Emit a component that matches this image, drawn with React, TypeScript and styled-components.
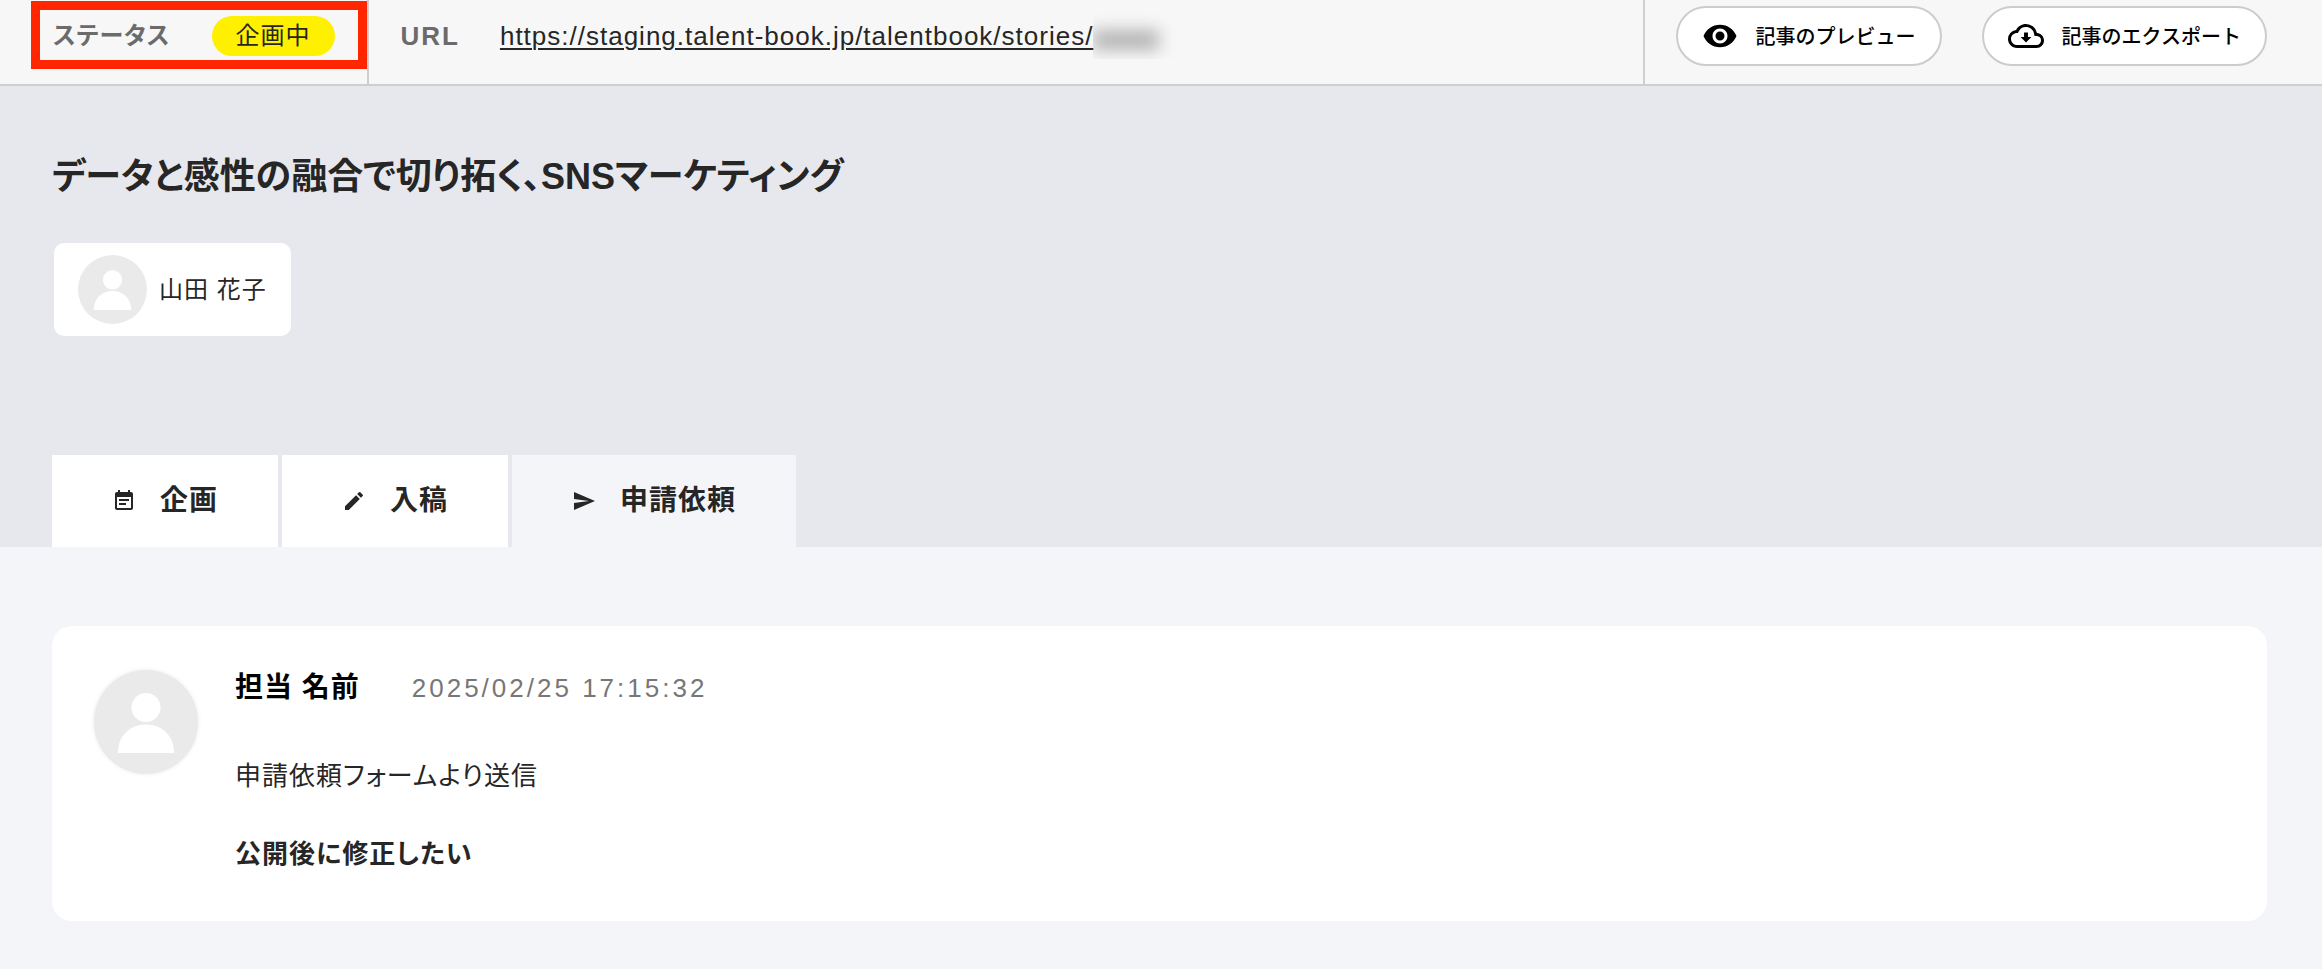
import React from "react";
import styled, { createGlobalStyle } from "styled-components";

const GlobalStyle = createGlobalStyle`
  *, *::before, *::after { box-sizing: border-box; }
  body {
    margin: 0;
    background: #f4f5f9;
    color: #262626;
    font-family: "Liberation Sans", "Noto Sans CJK JP", sans-serif;
    font-size: 24px;
    line-height: 1.5;
    letter-spacing: 1px;
    font-feature-settings: "palt";
  }
  h1, h2, p { margin: 0; }
  button { font: inherit; color: inherit; cursor: pointer; }
`;

const Header = styled.header`
  display: flex;
  height: 86px;
  background: #f7f7f7;
  border-bottom: 2px solid #cfcfcf;
`;

const HeaderCell = styled.div<{ $grow?: boolean }>`
  position: relative;
  display: flex;
  align-items: center;
  flex: ${(p) => (p.$grow ? "1" : "none")};
  min-width: 0;
  padding: 0 32px 12px;
  border-right: 2px solid #cfcfcf;
  white-space: nowrap;
`;

const StatusCell = styled(HeaderCell)`
  gap: 41px;
  padding-left: 53px;
`;

const Highlight = styled.span`
  position: absolute;
  inset: 1px 0 15px 31px;
  border: 9px solid #ff2600;
  pointer-events: none;
`;

const FieldLabel = styled.span<{ $large?: boolean }>`
  color: #6b6b6b;
  font-size: ${(p) => (p.$large ? "26px" : "24px")};
  font-weight: 700;
  letter-spacing: ${(p) => (p.$large ? "2px" : "1px")};
`;

const StatusPill = styled.span`
  padding: 0 24px;
  border-radius: 20px;
  background: #fff000;
  line-height: 40px;
`;

const UrlCell = styled(HeaderCell)`
  gap: 40px;
`;

const StoryUrl = styled.span`
  display: flex;
  align-items: center;
`;

const StoryLink = styled.a`
  color: #262626;
  font-size: 26px;
  text-decoration: underline;
  text-decoration-thickness: 2px;
  text-underline-offset: 3px;
`;

const HiddenId = styled.span`
  width: 84px;
  height: 46px;
  overflow: hidden;
  &::before {
    content: "";
    display: block;
    width: 66px;
    height: 20px;
    margin: 17px 0 0;
    background: #b4b4b4;
    filter: blur(8px);
  }
`;

const Actions = styled.div`
  display: flex;
  align-items: center;
  gap: 40px;
  padding: 0 55px 12px 31px;
`;

const ActionButton = styled.button`
  display: flex;
  align-items: center;
  gap: 18px;
  height: 60px;
  padding: 0 24px;
  border: 2px solid #cccccc;
  border-radius: 30px;
  background: #ffffff;
  color: #000000;
  font-family: "Noto Sans CJK JP", sans-serif;
  font-size: 20px;
  font-weight: 500;
  font-feature-settings: normal;
  letter-spacing: normal;
  white-space: nowrap;
`;

const Icon = styled.svg<{ $size: number }>`
  flex: none;
  width: ${(p) => p.$size}px;
  height: ${(p) => p.$size}px;
  fill: currentColor;
`;

const Hero = styled.section`
  padding: 67px 52px 0;
  background: #e7e8ed;
`;

const Title = styled.h1`
  font-size: 36px;
  line-height: 48px;
  font-weight: 700;
  letter-spacing: normal;
`;

const Member = styled.div`
  display: inline-flex;
  align-items: center;
  gap: 12px;
  margin: 42px 0 119px 2px;
  padding: 12px 24px;
  border-radius: 10px;
  background: #ffffff;
  vertical-align: top;
`;

const AvatarImage = styled.svg<{ $size: number; $soft?: boolean }>`
  flex: none;
  width: ${(p) => p.$size}px;
  height: ${(p) => p.$size}px;
  border-radius: 50%;
  background: #eaeaea;
  fill: #ffffff;
  box-shadow: ${(p) => (p.$soft ? "0 0 4px #eaeaea" : "none")};
`;

const Tabs = styled.div`
  display: flex;
  gap: 4px;
`;

const Tab = styled.button<{ $active?: boolean }>`
  display: flex;
  align-items: center;
  gap: 24px;
  height: 92px;
  padding: 0 60px;
  border: 0;
  background: ${(p) => (p.$active ? "#f4f5f9" : "#ffffff")};
  font-size: 28px;
  font-weight: 700;
  letter-spacing: 1px;
`;

const Content = styled.main`
  padding: 79px 55px 47px 52px;
`;

const Comment = styled.article`
  display: flex;
  gap: 37px;
  padding: 44px 42px 47px;
  border-radius: 20px;
  background: #ffffff;
`;

const CommentHead = styled.div`
  display: flex;
  align-items: center;
  gap: 52px;
  margin-bottom: 50px;
  line-height: 36px;
`;

const Author = styled.h2`
  color: #000000;
  font-size: 28px;
  font-weight: 700;
`;

const Timestamp = styled.time`
  color: #777777;
  font-size: 26px;
  letter-spacing: 3px;
`;

const CommentText = styled.p<{ $strong?: boolean }>`
  font-size: 26px;
  line-height: 40px;
  font-weight: ${(p) => (p.$strong ? 700 : 400)};
  & + & { margin-top: 38px; }
`;

const Avatar = ({ size, soft }: { size: number; soft?: boolean }) => (
  <AvatarImage $size={size} $soft={soft} viewBox="0 0 70 70" aria-hidden="true">
    <circle cx="35" cy="25.2" r="9.8" />
    <path d="M16 55.8C16 44.500 24 36.600 35 36.600S54 44.500 54 55.800Z" />
  </AvatarImage>
);

const TABS = [
  {
    label: "企画",
    path: "M17 10H7v2h10v-2zm2-7h-1V1h-2v2H8V1H6v2H5c-1.110 0-1.990.9-1.990 2L3 19c0 1.100.89 2 2 2h14c1.100 0 2-.9 2-2V5c0-1.100-.9-2-2-2zm0 16H5V8h14v11zm-5-5H7v2h7v-2z",
  },
  {
    label: "入稿",
    path: "M3 17.250V21h3.750L17.810 9.940l-3.750-3.750L3 17.250zM20.710 7.040a1 1 0 0 0 0-1.410l-2.340-2.340a1 1 0 0 0-1.410 0l-1.830 1.830 3.750 3.750 1.830-1.830z",
  },
  { label: "申請依頼", path: "M2.010 21L23 12 2.010 3 2 10l15 2-15 2z", active: true },
];

const App = () => (
  <>
    <GlobalStyle />
    <Header>
      <StatusCell>
        <FieldLabel>ステータス</FieldLabel>
        <StatusPill>企画中</StatusPill>
        <Highlight />
      </StatusCell>
      <UrlCell $grow>
        <FieldLabel $large>URL</FieldLabel>
        <StoryUrl>
          <StoryLink href="https://staging.talent-book.jp/talentbook/stories/">
            https://staging.talent-book.jp/talentbook/stories/
          </StoryLink>
          <HiddenId aria-hidden="true" />
        </StoryUrl>
      </UrlCell>
      <Actions>
        <ActionButton type="button">
          <Icon $size={36} viewBox="0 0 24 24" aria-hidden="true">
            <path d="M12 4.500C7 4.500 2.730 7.610 1 12c1.730 4.390 6 7.500 11 7.500s9.270-3.110 11-7.500c-1.730-4.390-6-7.500-11-7.500zM12 17c-2.760 0-5-2.240-5-5s2.240-5 5-5 5 2.240 5 5-2.240 5-5 5zm0-8c-1.660 0-3 1.340-3 3s1.340 3 3 3 3-1.340 3-3-1.340-3-3-3z" />
          </Icon>
          記事のプレビュー
        </ActionButton>
        <ActionButton type="button">
          <Icon $size={36} viewBox="0 0 24 24" aria-hidden="true">
            <path d="M19.350 10.040A7.490 7.490 0 0 0 12 4C9.110 4 6.600 5.640 5.350 8.040A5.994 5.994 0 0 0 0 14c0 3.310 2.690 6 6 6h13c2.760 0 5-2.240 5-5 0-2.640-2.050-4.780-4.650-4.960zM19 18H6c-2.210 0-4-1.790-4-4 0-2.050 1.530-3.760 3.560-3.970l1.070-.11.500-.95A5.469 5.469 0 0 1 12 6c2.620 0 4.880 1.860 5.390 4.430l.3 1.500 1.530.11A2.980 2.980 0 0 1 22 15c0 1.650-1.350 3-3 3z" />
            <path d="M10.700 9.700h2.600v3h2.300L12 16.400 8.400 12.700h2.300z" />
          </Icon>
          記事のエクスポート
        </ActionButton>
      </Actions>
    </Header>
    <Hero>
      <Title>データと感性の融合で切り拓く、SNSマーケティング</Title>
      <Member>
        <Avatar size={69} />
        <span>山田 花子</span>
      </Member>
      <Tabs role="tablist">
        {TABS.map((tab) => (
          <Tab key={tab.label} type="button" role="tab" aria-selected={!!tab.active} $active={tab.active}>
            <Icon $size={24} viewBox="0 0 24 24" aria-hidden="true">
              <path d={tab.path} />
            </Icon>
            {tab.label}
          </Tab>
        ))}
      </Tabs>
    </Hero>
    <Content>
      <Comment>
        <Avatar size={104} soft />
        <div>
          <CommentHead>
            <Author>担当 名前</Author>
            <Timestamp dateTime="2025-02-25T17:15:32">2025/02/25 17:15:32</Timestamp>
          </CommentHead>
          <CommentText>申請依頼フォームより送信</CommentText>
          <CommentText $strong>公開後に修正したい</CommentText>
        </div>
      </Comment>
    </Content>
  </>
);

export default App;
